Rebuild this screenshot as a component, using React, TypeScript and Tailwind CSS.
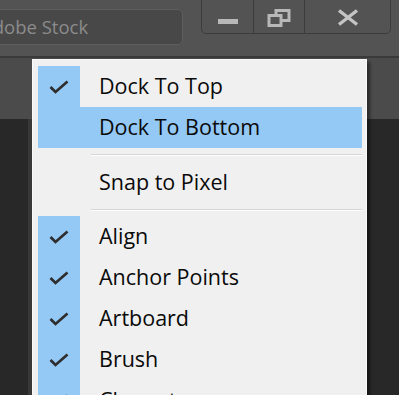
const ITEMS: { label: string; checked?: boolean; active?: boolean; sep?: number }[] = [
  { label: "Dock To Top", checked: true },
  { label: "Dock To Bottom", active: true },
  { label: "", sep: 14 },
  { label: "Snap to Pixel" },
  { label: "", sep: 13 },
  { label: "Align", checked: true },
  { label: "Anchor Points", checked: true },
  { label: "Artboard", checked: true },
  { label: "Brush", checked: true },
  { label: "Character", checked: true },
];

function Check() {
  return (
    <svg width="20" height="14" viewBox="0 0 20 14" fill="none">
      <path d="M1.5 7 L6.5 12 L18.5 1.5" stroke="#2e2e2e" strokeWidth="2.7" strokeLinejoin="miter" />
    </svg>
  );
}

export default function App() {
  return (
    <div className="relative w-[399px] h-[395px] overflow-hidden bg-[#282828] font-['Open_Sans',sans-serif]">
      {/* top bar */}
      <div className="flex h-[56px] bg-[#535353]">
        <div className="mt-[9px] -ml-[40px] h-[36px] w-[223px] rounded-[5px] border border-[#5e5e5e] bg-[#484848] pl-[20px] flex items-center text-[18.5px] text-[#8b8b8b] whitespace-nowrap">
          Adobe Stock
        </div>
        <div className="ml-[18px] -mt-px flex h-[35px] w-[190px] rounded-b-[5px] border border-[#3c3c3c] bg-[#535353]">
          <div className="flex w-[52px] items-center justify-center border-r border-[#3c3c3c]">
            <div className="mt-[9px] h-[5px] w-[20px] bg-[#b8b8b8]" />
          </div>
          <div className="flex w-[51px] items-center justify-center border-r border-[#3c3c3c]">
            <svg width="24" height="18" viewBox="0 0 24 18" fill="none" className="mt-[2px]">
              <rect x="9" y="1.5" width="13" height="10" stroke="#b8b8b8" strokeWidth="3" />
              <rect x="2" y="6.5" width="12" height="10" stroke="#b8b8b8" strokeWidth="3" fill="#535353" />
            </svg>
          </div>
          <div className="flex flex-1 items-center justify-center">
            <svg width="22" height="17" viewBox="0 0 22 17" className="mt-[2px]">
              <path d="M2 1.5 L20 15.5 M20 1.5 L2 15.5" stroke="#c4c4c4" strokeWidth="3.4" />
            </svg>
          </div>
        </div>
      </div>
      <div className="h-[2px] bg-[#3a3a3a]" />
      <div className="h-[61px] bg-[#4b4b4b]" />
      <div className="absolute left-0 top-[119px] bottom-0 w-[32px] border-r-[4px] border-[#383838]" />

      {/* dropdown menu */}
      <div className="absolute left-[32px] top-[59px] w-[335px] border border-[#fafafa] bg-[#f0f0f0] pl-[5px] pr-[4px] pt-[6px] shadow-[3px_3px_3px_rgba(0,0,0,0.45)]">
        {ITEMS.map((it, i) =>
          it.sep ? (
            <div key={i} className="flex" style={{ height: it.sep }}>
              <div className="w-[53px]" />
              <div className="mt-[6px] h-[2px] flex-1 border-t border-[#d6d6d6] bg-white" />
            </div>
          ) : (
            <div
              key={i}
              className={`flex h-[41px] items-center ${it.active ? "bg-[#94c8f5]" : ""}`}
            >
              <div
                className={`flex h-full w-[42px] items-center justify-center ${it.checked ? "bg-[#94c8f5]" : ""}`}
              >
                {it.checked && <Check />}
              </div>
              <span className="pl-[19px] text-[21.5px] text-[#0a0a0a] whitespace-nowrap">{it.label}</span>
            </div>
          )
        )}
      </div>
    </div>
  );
}
